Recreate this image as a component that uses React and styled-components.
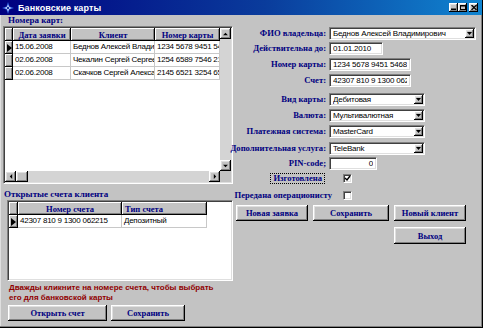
import styled, { createGlobalStyle } from "styled-components";

const GlobalStyle = createGlobalStyle`
  html, body { margin: 0; padding: 0; }
  body { background: #c3c3c3; font-family: "Liberation Sans", Arial, sans-serif; }
`;

const raised = `
  box-shadow: inset -1px -1px 0 #000, inset 1px 1px 0 #fff,
    inset -2px -2px 0 #808080, inset 2px 2px 0 #dfdfdf;
`;

const sunken = `
  border-top: 1px solid #808080;
  border-left: 1px solid #808080;
  border-bottom: 1px solid #fff;
  border-right: 1px solid #fff;
  box-shadow: inset 1px 1px 0 #404040, inset -1px -1px 0 #dfdfdf;
`;

const Window = styled.div`
  width: 483px;
  height: 328px;
  box-sizing: border-box;
  background: #c3c3c3;
  border-right: 1px solid #000;
  border-bottom: 1px solid #000;
  box-shadow: inset -1px -1px 0 #808080, inset 1px 0 0 #dfdfdf;
  display: flex;
  flex-direction: column;
  overflow: hidden;
`;

const TitleBar = styled.div`
  height: 15px;
  flex: none;
  display: flex;
  align-items: center;
  gap: 4px;
  padding: 0 4px 0 2px;
  background: linear-gradient(90deg, #000080 0%, #0a3c9c 55%, #1084d0 100%);
`;

const Title = styled.div`
  flex: 1;
  color: #fff;
  font: bold 9px "Liberation Sans", Arial, sans-serif;
  letter-spacing: 0.1px;
`;

const WinButtons = styled.div`
  display: flex;
  align-items: center;
`;

const WinBtn = styled.div`
  width: 9px;
  height: 9px;
  margin-left: ${(p) => p.$gap || 0}px;
  background: #c3c3c3;
  ${raised}
  display: flex;
  align-items: center;
  justify-content: center;
`;

const Body = styled.div`
  flex: 1;
  display: flex;
`;

const LeftCol = styled.div`
  width: 230px;
  padding-left: 3px;
  display: flex;
  flex-direction: column;
`;

const SectionLabel = styled.div`
  font: bold 9px "Liberation Serif", "Times New Roman", serif;
  color: #000080;
  line-height: 11px;
  padding-top: ${(p) => p.$top || 0}px;
  padding-left: ${(p) => p.$left || 0}px;
`;

const GridFrame = styled.div`
  box-sizing: border-box;
  width: ${(p) => p.$w}px;
  height: ${(p) => p.$h}px;
  margin-left: ${(p) => p.$left || 0}px;
  ${sunken}
  padding: 1px;
  background: #fff;
`;

const ScrollLayout = styled.div`
  width: 100%;
  height: 100%;
  display: grid;
  grid-template-columns: 1fr 11px;
  grid-template-rows: 1fr 11px;
  background: #c3c3c3;
`;

const DataArea = styled.div`
  background: #fff;
  overflow: hidden;
`;

const Table = styled.div`
  display: grid;
  grid-template-columns: ${(p) => p.$cols};
  grid-auto-rows: 13px;
`;

const HeadCell = styled.div`
  background: #c3c3c3;
  box-shadow: inset -1px -1px 0 #000, inset 1px 1px 0 #fff, inset -2px -2px 0 #808080;
  font: bold 8.5px "Liberation Serif", "Times New Roman", serif;
  color: #000080;
  display: flex;
  align-items: center;
  justify-content: ${(p) => (p.$left ? "flex-start" : "center")};
  padding-left: ${(p) => (p.$left ? 3 : 0)}px;
  white-space: nowrap;
  overflow: hidden;
`;

const Indicator = styled.div`
  background: #c3c3c3;
  box-shadow: inset -1px -1px 0 #000, inset 1px 1px 0 #fff, inset -2px -2px 0 #808080;
  display: flex;
  align-items: center;
  justify-content: center;
`;

const Cell = styled.div`
  border-right: 1px solid #c8c8c8;
  border-bottom: 1px solid #c8c8c8;
  font-size: 8px;
  letter-spacing: -0.25px;
  color: #000;
  line-height: 12px;
  padding-left: 2px;
  white-space: nowrap;
  overflow: hidden;
`;

const VScroll = styled.div`
  display: flex;
  flex-direction: column;
  background: #d4d4d4;
`;

const HScroll = styled.div`
  display: flex;
  background: #d4d4d4;
`;

const ScrollBtn = styled.div`
  width: 11px;
  height: 11px;
  flex: none;
  background: #c3c3c3;
  ${raised}
  display: flex;
  align-items: center;
  justify-content: center;
`;

const Thumb = styled.div`
  width: 12px;
  flex: none;
  background: #c3c3c3;
  ${raised}
`;

const Track = styled.div`
  flex: 1;
`;

const Corner = styled.div`
  background: #c3c3c3;
`;

const Hint = styled.div`
  margin-top: 2px;
  padding-left: 6px;
  font: bold 8px "Liberation Sans", Arial, sans-serif;
  color: #900000;
  line-height: 9.5px;
`;

const LeftButtons = styled.div`
  display: flex;
  gap: 4px;
  margin-top: 3px;
  padding-left: 5px;
`;

const Button = styled.div`
  box-sizing: border-box;
  width: ${(p) => p.$w}px;
  height: ${(p) => p.$h || 16}px;
  background: #c3c3c3;
  ${raised}
  font: bold 8.5px "Liberation Serif", "Times New Roman", serif;
  color: #000080;
  display: flex;
  align-items: center;
  justify-content: center;
  grid-column: ${(p) => p.$col || "auto"};
`;

const RightCol = styled.div`
  flex: 1;
  padding-top: 12px;
  display: flex;
  flex-direction: column;
`;

const Form = styled.div`
  display: grid;
  grid-template-columns: 93px 1fr;
  grid-template-rows: 15px 16px 16px 19px 16px 16px 17px 15px 13px;
  column-gap: 3px;
  align-items: start;
`;

const Label = styled.div`
  font: bold 8.6px "Liberation Serif", "Times New Roman", serif;
  color: #000080;
  justify-self: end;
  line-height: 13px;
  white-space: nowrap;
`;

const Field = styled.div`
  box-sizing: border-box;
  width: ${(p) => p.$w}px;
  height: 13px;
  ${sunken}
  background: #fff;
  font-size: 8px;
  letter-spacing: -0.2px;
  line-height: 11px;
  padding: 0 3px 0 3px;
  white-space: nowrap;
  overflow: hidden;
  display: flex;
  align-items: center;
  justify-content: space-between;
`;

const FieldText = styled.span`
  flex: 1;
  text-align: ${(p) => p.$align || "left"};
  overflow: hidden;
`;

const DropBtn = styled.div`
  width: 9px;
  height: 9px;
  flex: none;
  margin-right: -2px;
  background: #c3c3c3;
  ${raised}
  display: flex;
  align-items: center;
  justify-content: center;
`;

const CheckRow = styled.div`
  display: grid;
  grid-template-columns: 107px 9px;
  column-gap: 3px;
  align-items: center;
  height: 11px;
  margin-top: ${(p) => p.$top}px;
`;

const CheckLabel = styled.div`
  font: bold 8.6px "Liberation Serif", "Times New Roman", serif;
  color: #000080;
  white-space: nowrap;
  justify-self: end;
  margin-right: ${(p) => p.$pad}px;
  padding: 0 2px;
  line-height: 9px;
  border: 1px dotted ${(p) => (p.$focus ? "#000" : "transparent")};
`;

const CheckBox = styled.div`
  box-sizing: border-box;
  width: 9px;
  height: 9px;
  ${sunken}
  background: #fff;
  display: flex;
  align-items: center;
  justify-content: center;
`;

const ButtonGrid = styled.div`
  display: grid;
  grid-template-columns: 72px 76px 72px;
  column-gap: 5px;
  row-gap: 6px;
  margin-top: 4px;
  padding-left: 3px;
`;

const Arrow = ({ dir }) => {
  const pts = {
    up: "1,4 4,1 7,4",
    down: "1,1 4,4 7,1",
    left: "4,1 1,4 4,7",
    right: "1,1 4,4 1,7",
  }[dir];
  const vb = dir === "up" || dir === "down" ? "0 0 8 5" : "0 0 5 8";
  const w = dir === "up" || dir === "down" ? 7 : 4;
  const h = dir === "up" || dir === "down" ? 4 : 7;
  return (
    <svg width={w} height={h} viewBox={vb}>
      <polygon points={pts} fill="#000" />
    </svg>
  );
};

const RowMark = () => (
  <svg width="5" height="8" viewBox="0 0 5 8">
    <polygon points="0,0 5,4 0,8" fill="#000" />
  </svg>
);

const AppIcon = () => (
  <svg width="12" height="12" viewBox="0 0 12 12">
    <polygon points="6,0 7.5,4.5 12,6 7.5,7.5 6,12 4.5,7.5 0,6 4.5,4.5" fill="#3060e0" />
    <polygon points="6,2.5 7,5 9.5,6 7,7 6,9.5 5,7 2.5,6 5,5" fill="#dfe8ff" />
    <circle cx="6" cy="6" r="1.2" fill="#1030a0" />
  </svg>
);

const cards = [
  ["15.06.2008", "Беднов Алексей Владимирович", "1234 5678 9451 5468"],
  ["02.06.2008", "Чекалин Сергей Сергеевич", "1254 6589 7546 2154"],
  ["02.06.2008", "Скачков Сергей Александрович", "2145 6521 3254 6587"],
];

const form = [
  ["ФИО владельца:", "Беднов Алексей Владимирович", 147, true],
  ["Действительна до:", "01.01.2010", 54],
  ["Номер карты:", "1234 5678 9451 5468", 82],
  ["Счет:", "42307 810 9 1300 062215", 82],
  ["Вид карты:", "Дебитовая", 96, true],
  ["Валюта:", "Мультивалютная", 96, true],
  ["Платежная система:", "MasterCard", 96, true],
  ["Дополнительная услуга:", "TeleBank", 96, true],
];

export default function App() {
  return (
    <>
      <GlobalStyle />
      <Window>
        <TitleBar>
          <AppIcon />
          <Title>Банковские карты</Title>
          <WinButtons>
            <WinBtn>
              <svg width="5" height="5" viewBox="0 0 5 5">
                <rect x="0" y="3.5" width="5" height="1.5" fill="#000" />
              </svg>
            </WinBtn>
            <WinBtn>
              <svg width="6" height="5" viewBox="0 0 6 5">
                <rect x="0.5" y="0.5" width="5" height="4" fill="none" stroke="#000" strokeWidth="1" />
                <rect x="0" y="0" width="6" height="1.5" fill="#000" />
              </svg>
            </WinBtn>
            <WinBtn $gap={2}>
              <svg width="6" height="5" viewBox="0 0 6 5">
                <path d="M0.5 0 L5.5 5 M5.5 0 L0.5 5" stroke="#000" strokeWidth="1.3" />
              </svg>
            </WinBtn>
          </WinButtons>
        </TitleBar>
        <Body>
          <LeftCol>
            <SectionLabel $left={5}>Номера карт:</SectionLabel>
            <GridFrame $w={230} $h={158}>
              <ScrollLayout>
                <DataArea>
                  <Table $cols="8px 58px 84px 65px">
                    <Indicator />
                    <HeadCell>Дата заявки</HeadCell>
                    <HeadCell>Клиент</HeadCell>
                    <HeadCell>Номер карты</HeadCell>
                    {cards.map((r, i) => [
                      <Indicator key={`i${i}`}>{i === 0 && <RowMark />}</Indicator>,
                      ...r.map((c, j) => <Cell key={`${i}-${j}`}>{c}</Cell>),
                    ])}
                  </Table>
                </DataArea>
                <VScroll>
                  <ScrollBtn><Arrow dir="up" /></ScrollBtn>
                  <Track />
                  <ScrollBtn><Arrow dir="down" /></ScrollBtn>
                </VScroll>
                <HScroll>
                  <ScrollBtn><Arrow dir="left" /></ScrollBtn>
                  <Thumb />
                  <Track />
                  <ScrollBtn><Arrow dir="right" /></ScrollBtn>
                </HScroll>
                <Corner />
              </ScrollLayout>
            </GridFrame>
            <SectionLabel $top={5} $left={1}>Открытые счета клиента</SectionLabel>
            <GridFrame $w={226} $h={81} $left={4}>
              <Table $cols="9px 104px 85px">
                <Indicator />
                <HeadCell>Номер счета</HeadCell>
                <HeadCell $left>Тип счета</HeadCell>
                <Indicator><RowMark /></Indicator>
                <Cell>42307 810 9 1300 062215</Cell>
                <Cell>Депозитный</Cell>
              </Table>
            </GridFrame>
            <Hint>
              Дважды кликните на номере счета, чтобы выбрать
              <br />
              его для банковской карты
            </Hint>
            <LeftButtons>
              <Button $w={99}>Открыть счет</Button>
              <Button $w={74}>Сохранить</Button>
            </LeftButtons>
          </LeftCol>
          <RightCol>
            <Form>
              {form.map(([label, value, w, combo]) => [
                <Label key={`l${label}`}>{label}</Label>,
                <Field key={`f${label}`} $w={w}>
                  <FieldText>{value}</FieldText>
                  {combo && (
                    <DropBtn>
                      <svg width="5" height="3" viewBox="0 0 5 3">
                        <polygon points="0,0 5,0 2.5,3" fill="#000" />
                      </svg>
                    </DropBtn>
                  )}
                </Field>,
              ])}
              <Label>PIN-code;</Label>
              <Field $w={48}>
                <FieldText $align="right">0</FieldText>
              </Field>
            </Form>
            <CheckRow $top={3}>
              <CheckLabel $pad={15} $focus>Изготовлена</CheckLabel>
              <CheckBox>
                <svg width="7" height="7" viewBox="0 0 7 7">
                  <polyline points="1,3 3,5 6,1" fill="none" stroke="#000" strokeWidth="1.4" />
                </svg>
              </CheckBox>
            </CheckRow>
            <CheckRow $top={6}>
              <CheckLabel $pad={5}>Передана операционисту</CheckLabel>
              <CheckBox />
            </CheckRow>
            <ButtonGrid>
              <Button $w={72}>Новая заявка</Button>
              <Button $w={76}>Сохранить</Button>
              <Button $w={72}>Новый клиент</Button>
              <Button $w={72} $h={17} $col={3}>Выход</Button>
            </ButtonGrid>
          </RightCol>
        </Body>
      </Window>
    </>
  );
}
